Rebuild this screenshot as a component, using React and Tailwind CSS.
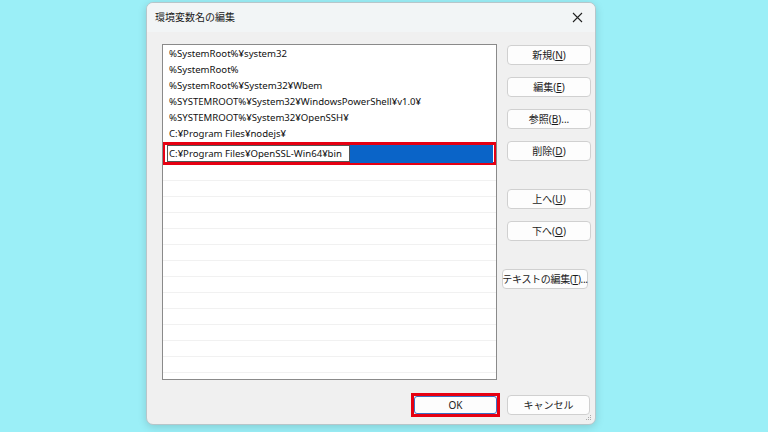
import React from 'react';

const paths = [
  '%SystemRoot%¥system32',
  '%SystemRoot%',
  '%SystemRoot%¥System32¥Wbem',
  '%SYSTEMROOT%¥System32¥WindowsPowerShell¥v1.0¥',
  '%SYSTEMROOT%¥System32¥OpenSSH¥',
  'C:¥Program Files¥nodejs¥',
];

const font = { fontFamily: '"Noto Sans", "Noto Sans CJK JP", sans-serif' };

// label with an underlined access key, e.g. 新規(N)
const Btn = ({ label, keyChar, dots, className = 'w-[84px]' }) => (
  <button
    className={`h-[20px] flex items-center justify-center whitespace-nowrap rounded-[4px] border border-[#d0d0d0] bg-[#fdfdfd] text-[10px] text-[#1b1b1b] leading-none ${className}`}
  >
    {label}
    {keyChar && (
      <>
        (<span className="underline">{keyChar}</span>)
      </>
    )}
    {dots && '...'}
  </button>
);

const App = () => {
  return (
    <div className="w-[768px] h-[432px] bg-[#9befF7] overflow-hidden" style={font}>
      <div className="ml-[146px] pt-[2px] w-[450px]">
        <div className="relative h-[423px] flex flex-col rounded-[7px] border border-[#b7c6ca] bg-[#f0f0f0] shadow-[0_2px_8px_rgba(0,0,0,0.15)] overflow-hidden">
          {/* title bar */}
          <div className="h-[29px] flex items-center justify-between pl-[8px] pr-[8px] bg-[#f2f5f6]">
            <span className="text-[10px] text-[#1b1b1b]">環境変数名の編集</span>
            <svg width="11" height="11" viewBox="0 0 11 11" className="mr-[4px]">
              <path d="M1 1 L10 10 M10 1 L1 10" stroke="#222" strokeWidth="1.1" />
            </svg>
          </div>

          <div className="flex-1 flex flex-col pl-[15px] pr-[3px] pt-[12px]">
            <div className="flex">
              {/* path list */}
              <div className="shrink-0 w-[335px] h-[336px] border border-[#8a8a8a] bg-white pt-[1px] overflow-hidden">
                {paths.map((p) => (
                  <div key={p} className="h-[16px] leading-[16px] pl-[6px] text-[9.6px] text-[#111] whitespace-nowrap">
                    {p}
                  </div>
                ))}
                <div className="h-[23px] -mx-[1px] border-[3px] border-[#e60012] flex items-center">
                  <div className="ml-[2px] h-[17px] border border-[#555] bg-white pl-[1px] pr-[7px] text-[9.6px] leading-[15px] text-[#111] whitespace-nowrap">
                    C:¥Program Files¥OpenSSL-Win64¥bin
                  </div>
                  <div className="flex-1 h-[18px] bg-[#0a64c8] mr-[1px]" />
                </div>
                {Array.from({ length: 14 }).map((_, i) => (
                  <div key={i} className="h-[16px] border-b border-[#f1f1f1]" />
                ))}
              </div>

              {/* action buttons */}
              <div className="ml-[10px] w-[84px] shrink-0 flex flex-col items-end pt-[1px]">
                <div className="flex flex-col gap-[12px]">
                  <Btn label="新規" keyChar="N" />
                  <Btn label="編集" keyChar="E" />
                  <Btn label="参照" keyChar="B" dots />
                  <Btn label="削除" keyChar="D" />
                </div>
                <div className="flex flex-col gap-[12px] mt-[28px]">
                  <Btn label="上へ" keyChar="U" />
                  <Btn label="下へ" keyChar="O" />
                </div>
                <Btn
                  label="テキストの編集"
                  keyChar="T"
                  dots
                  className="mt-[28px] mr-[3px] w-[86px] shrink-0 tracking-[-0.3px]"
                />
              </div>
            </div>

            {/* dialog buttons */}
            <div className="flex justify-end items-center mt-[13px] pr-[2px]">
              <div className="border-[3px] border-[#e60012]">
                <button className="block w-[83px] h-[18px] rounded-[3px] border border-[#3b6fc4] bg-[#fdfdfd] text-[10px] leading-none text-[#1b1b1b]">
                  OK
                </button>
              </div>
              <button className="ml-[7px] w-[83px] h-[20px] rounded-[4px] border border-[#d0d0d0] bg-[#fdfdfd] text-[10px] leading-none text-[#1b1b1b]">
                キャンセル
              </button>
            </div>
          </div>

          {/* resize grip */}
          <svg width="6" height="6" viewBox="0 0 6 6" className="absolute right-[3px] bottom-[3px]">
            <rect x="4" y="0" width="1" height="1" fill="#aaa" />
            <rect x="2" y="2" width="1" height="1" fill="#aaa" />
            <rect x="4" y="2" width="1" height="1" fill="#aaa" />
            <rect x="0" y="4" width="1" height="1" fill="#aaa" />
            <rect x="2" y="4" width="1" height="1" fill="#aaa" />
            <rect x="4" y="4" width="1" height="1" fill="#aaa" />
          </svg>
        </div>
      </div>
    </div>
  );
};

export default App;
